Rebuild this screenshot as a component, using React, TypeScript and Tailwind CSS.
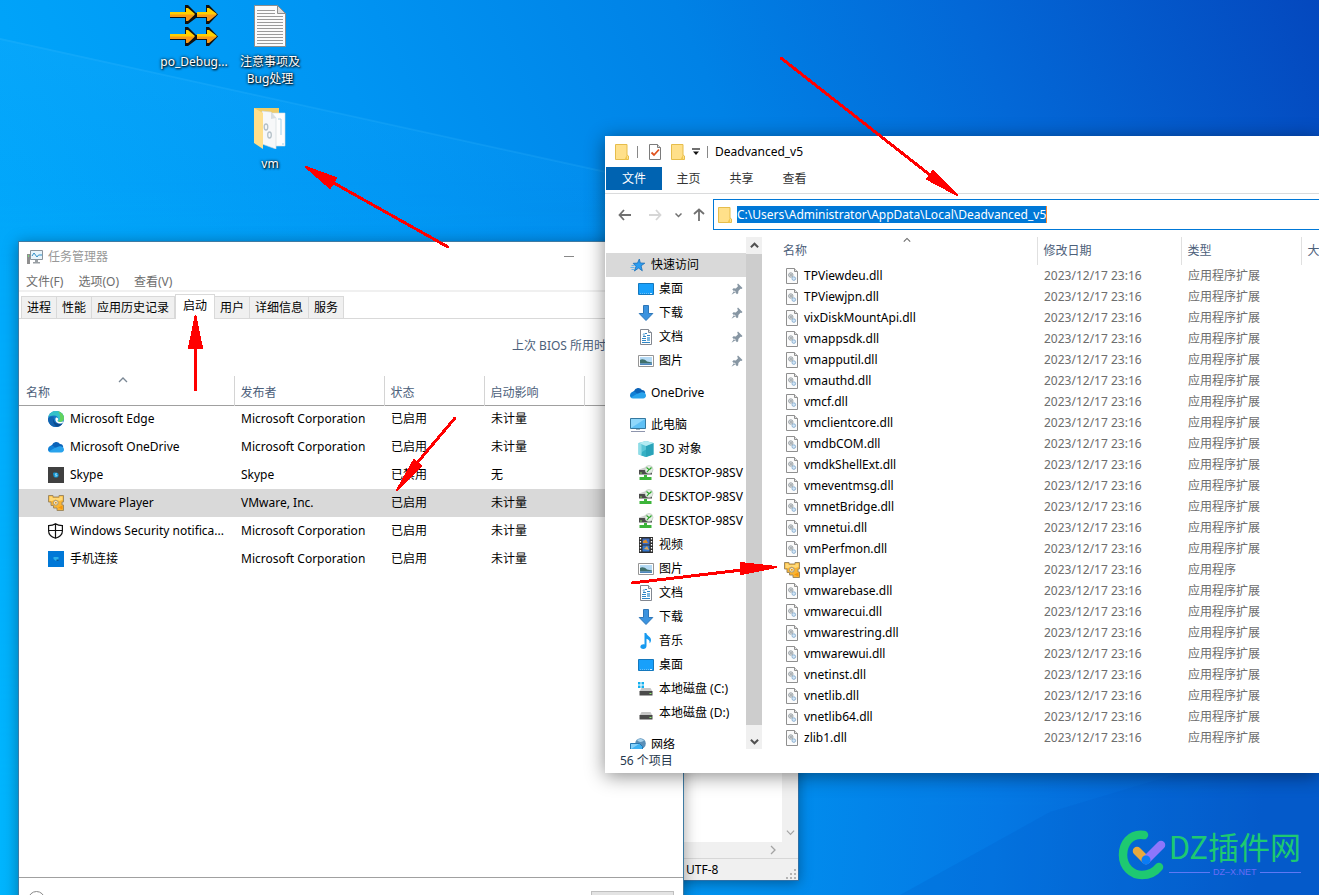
import type { ReactNode } from "react";

type IconProps = { className?: string };

/* ---------- Desktop icons ---------- */

function ArrowPair() {
  return (
    <g>
      <path d="M0 7h15V0h3l8 8h10V0h3l9 9.500L39 19h-3v-6H26l-8 6h-3v-6H0z" fill="#111" />
      <path d="M0 7h16V3h2l7 6-7 6h-2v-3H0zM27 7h10V3h2l8 6-8 6h-2v-3H27z" fill="#ffd000" />
      <path d="M0 9.500h25L18 16h-2v-4H0zM27 9.500h20L39 16h-2v-4H27z" fill="#f79a18" />
    </g>
  );
}

function PoDebugIcon() {
  return (
    <svg viewBox="0 0 48 42" className="h-[42px] w-[48px]" aria-hidden="true">
      <ArrowPair />
      <g transform="translate(0 22)"><ArrowPair /></g>
    </svg>
  );
}

function TextFileIcon() {
  return (
    <svg viewBox="0 0 32 42" className="h-[42px] w-[32px]" aria-hidden="true">
      <path d="M.5.5h23l8 8v33H.5z" fill="#fbfbfb" stroke="#8d8d8d" />
      <path d="M23.500.5v8h8z" fill="#dedede" stroke="#8d8d8d" />
      <path
        d="M3 5.500h18M3 8.500h18M3 11.500h26M3 14.500h26M3 17.500h26M3 20.500h26M3 23.500h26M3 26.500h26M3 29.500h26M3 32.500h26M3 35.500h26M3 38.500h26"
        stroke="#9a9a9a"
      />
    </svg>
  );
}

function OpenFolderIcon() {
  return (
    <svg viewBox="0 0 32 42" className="h-[42px] w-[32px]" aria-hidden="true">
      <path d="M0 1h25v35H9z" fill="#f0cc66" />
      <path d="M17 6h14v33H17z" fill="#fdfdfd" stroke="#d5dde2" strokeWidth=".6" />
      <path d="M8 4l9 1 5 6v31L8 37z" fill="#f7f8f9" stroke="#cfd6da" strokeWidth=".6" />
      <path d="M17 5v7l5-1z" fill="#d8dee2" />
      <ellipse cx="12" cy="20" rx="1.800" ry="3" fill="none" stroke="#b4c0c8" strokeWidth="1.300" />
      <ellipse cx="15.500" cy="28" rx="1.800" ry="3" fill="none" stroke="#b4c0c8" strokeWidth="1.300" />
      <path d="M24 12h3v16M28 37h2" fill="none" stroke="#a4d0e8" />
      <path d="M0 1l9 5v36l-9-6z" fill="#ffdf8c" />
    </svg>
  );
}

/* ---------- Small icons ---------- */

function TaskManagerIcon() {
  return (
    <svg viewBox="0 0 16 16" className="size-4 shrink-0" aria-hidden="true">
      <path d="M0 5h3v10H0z" fill="#8f8f8f" />
      <path d="M1 6h1v2H1z" fill="#7cd67c" />
      <path d="M3.500 1.500h12v9h-12z" fill="#e8f4fb" stroke="#8a949c" />
      <path d="M5 7l2-3 3 4 1.500-2H15" fill="none" stroke="#2f8fc7" />
      <path d="M8 11h3v2h2v1.500H6V13h2z" fill="#9aa0a5" />
    </svg>
  );
}

function EdgeIcon() {
  return (
    <svg viewBox="0 0 16 16" className="size-4 shrink-0" aria-hidden="true">
      <circle cx="8" cy="8" r="8" fill="#1478c8" />
      <path d="M.3 6C1.500 1.800 5 0 8 0c4.500 0 8 3.200 8 7 0 2.500-2 4-4 4-1.500 0-2.500-.6-2.500-1.300 0-.5.700-.8.700-1.900C10.200 6 8.300 4.600 6 4.600 3.500 4.600 1.300 5.500.3 6z" fill="#35c1c9" />
      <path d="M10 .3c3.500.9 6 3.600 6 6.700 0 2.500-2 4-4 4-1 0-1.700-.2-2.100-.6C13 9.500 13 4 10 .3z" fill="#63d35d" />
      <path d="M6 6c-2 2-1.500 7 4 9.700-5 1.500-10-2.500-10-7.700C1.500 5.500 4 5 6 6z" fill="#1263b0" />
      <path d="M6 7c-1 3.500 2 7 8.500 5.500-1 1.700-3 3-5 3.300C5.500 14.500 4 9.500 6 7z" fill="#0c4a8e" />
      <path d="M8 6.500c1.300-.3 2.500.8 2.200 2-.2.700-.7.900-.7 1.300.3 1 2.500 1.700 4.500.9 1-.3 1.500 0 1.200.6-1.500 1.900-5.700 1.700-7.200-.8-.8-1.300-.8-3.200 0-4z" fill="#fff" />
    </svg>
  );
}

function OneDriveIcon() {
  return (
    <svg viewBox="0 0 16 16" className="size-4 shrink-0" aria-hidden="true">
      <path d="M4 6a4.500 4.500 0 018-1c2 0 3 1.300 3.200 3L8 10 2 7.500z" fill="#0b63b8" />
      <path d="M0 10.500C0 8 2 6.500 4.300 6.500L11 11l-9.500 2C.6 12.600 0 11.600 0 10.500z" fill="#1180d6" />
      <path d="M3 13.500c-1 0-1.800-.3-2.300-1l6-3.500 4-1.500C13.500 6.800 16 8 16 10.600c0 1.700-1.200 2.900-2.800 2.900z" fill="#29a3ec" />
    </svg>
  );
}

function SkypeIcon() {
  return (
    <svg viewBox="0 0 16 16" className="size-4 shrink-0" aria-hidden="true">
      <path d="M0 0h16v16H0z" fill="#404040" />
      <circle cx="8" cy="8" r="2.600" fill="#1296d4" />
      <circle cx="6.300" cy="6.800" r="1.300" fill="#1296d4" />
      <path d="M9 7c-.5-.6-2-.4-1.800.4.200.6 1.800.4 1.800 1.200 0 .7-1.600.7-2 0" fill="none" stroke="#fff" strokeWidth=".6" />
    </svg>
  );
}

function VmwareIcon() {
  return (
    <svg viewBox="0 0 16 16" className="size-4 shrink-0" aria-hidden="true">
      <path d="M.5.500h4.500v1.500h6V.500h4.500V7H14v3h1.500v5.500H9V13H5.500v-2.500H3V7H.5z" fill="#f8b434" stroke="#a08a60" />
      <path d="M1.500 1.500h3V3h7V1.500h3V5l-3 1-4-1.500L4 6H1.500z" fill="#ffd978" />
      <path d="M10 12.500l4.500-2v4z" fill="#f6960c" />
      <circle cx="7.800" cy="7.800" r="2.400" fill="#fbe7b4" stroke="#a39a85" />
      <path d="M7 7h1.600v1.600H7z" fill="#e5951c" />
    </svg>
  );
}

function ShieldIcon() {
  return (
    <svg viewBox="0 0 16 16" className="size-4 shrink-0" aria-hidden="true">
      <path d="M7.500.8C9.200 2 11.700 2.700 14.400 2.700V8c0 3.500-3 6-6.900 7.300C3.600 14 .6 11.500.6 8V2.700C3.300 2.700 5.800 2 7.500.8zM7.500 1v14M.6 7.500h13.800" fill="#fff" stroke="#111" strokeWidth="1.200" />
    </svg>
  );
}

function PhoneLinkIcon() {
  return (
    <svg viewBox="0 0 16 16" className="size-4 shrink-0" aria-hidden="true">
      <path d="M0 0h16v16H0z" fill="#0078d7" />
      <path d="M5.500 6h5v2.500L8 10 5.500 8z" fill="#2bb0ea" />
      <path d="M8.500 8.500h2v1.500h-2z" fill="#0a5594" />
    </svg>
  );
}

function FolderIcon() {
  return (
    <svg viewBox="0 0 14 16" className="h-4 w-3.5 shrink-0" aria-hidden="true">
      <path d="M.5.500H12V11l1.500 1v3.500H.5z" fill="#ffe08a" stroke="#e6bd4b" />
      <path d="M12 10.500v5H9.500z" fill="#f2c84f" />
    </svg>
  );
}

function CheckPageIcon() {
  return (
    <svg viewBox="0 0 12 16" className="h-4 w-3 shrink-0" aria-hidden="true">
      <path d="M.5.500h8l3 3v12H.5z" fill="#fff" stroke="#7b7b7b" />
      <path d="M8.500.500v3h3" fill="#ddd" stroke="#7b7b7b" />
      <path d="M2.500 8.500L5 11l5-5.500" fill="none" stroke="#e0521f" strokeWidth="1.800" />
    </svg>
  );
}

function DllIcon() {
  return (
    <svg viewBox="0 0 16 16" className="size-4 shrink-0" aria-hidden="true">
      <path d="M2.500.500h8l3 3v12h-11z" fill="#fbfbfb" stroke="#8f8f8f" />
      <path d="M10.500.500v3h3" fill="#e3e3e3" stroke="#8f8f8f" />
      <circle cx="6.800" cy="7" r="2.200" fill="#eef0f1" stroke="#8f969c" strokeWidth=".9" />
      <circle cx="6.800" cy="7" r=".8" fill="none" stroke="#7d858b" strokeWidth=".7" />
      <circle cx="9.800" cy="10.600" r="1.800" fill="#d3e6f6" stroke="#86acce" strokeWidth=".9" />
    </svg>
  );
}

function StarIcon() {
  return (
    <svg viewBox="0 0 16 16" className="size-4 shrink-0" aria-hidden="true">
      <path d="M9.300 2l1 4 4.500.2-3.700 2.600 1.200 5-3.700-2.700-4.200 2.900 1.600-4.600L3.200 6.300l4.300-.2z" fill="#2b9cf0" stroke="#1b6fb8" strokeWidth=".8" />
      <path d="M1.500 8.500h3M.5 10.500h4M1.500 12.500h2.500" stroke="#5bb2ef" strokeWidth=".9" />
    </svg>
  );
}

function DesktopIcon() {
  return (
    <svg viewBox="0 0 16 16" className="size-4 shrink-0" aria-hidden="true">
      <path d="M.5 2.500h15v11H.5z" fill="#18a0fb" stroke="#1478bd" />
      <path d="M2 12.500h9" stroke="#6fc0f5" strokeDasharray="1 1" />
      <path d="M12 12.500h2" stroke="#d5eeff" />
    </svg>
  );
}

function DownloadIcon() {
  return (
    <svg viewBox="0 0 16 16" className="size-4 shrink-0" aria-hidden="true">
      <path d="M5.500.500h5v8h4.300L8 15.500 1.200 8.500h4.300z" fill="#3b93df" stroke="#2d76b8" />
    </svg>
  );
}

function DocumentIcon() {
  return (
    <svg viewBox="0 0 16 16" className="size-4 shrink-0" aria-hidden="true">
      <path d="M2.500.500h8l3 3v12h-11z" fill="#fff" stroke="#828790" />
      <path d="M10.500.500v3h3" fill="#dde3e8" stroke="#828790" />
      <path d="M7 4.500h2M5 7.500h3M9 6.500h3M4 9.500h4M4 11.500h4M4 13.500h8" stroke="#2f86c5" />
      <path d="M5 5.500l1-1v3" fill="none" stroke="#2f86c5" strokeWidth=".8" />
      <path d="M9 8h3v4H9z" fill="#7fb9e0" />
    </svg>
  );
}

function PictureIcon() {
  return (
    <svg viewBox="0 0 16 16" className="size-4 shrink-0" aria-hidden="true">
      <path d="M.5 2.500h15v11H.5z" fill="#fff" stroke="#959595" />
      <path d="M2 4h12v8H2z" fill="#b5daf5" />
      <path d="M2 7c2-1.500 5-.5 7 1.500l5 1v1H2z" fill="#3f6f6b" />
      <path d="M2 10.500h12V12H2z" fill="#4e86bd" />
    </svg>
  );
}

function ComputerIcon() {
  return (
    <svg viewBox="0 0 16 16" className="size-4 shrink-0" aria-hidden="true">
      <path d="M.5 1.500h15v10H.5z" fill="#5fc0f5" stroke="#35789f" />
      <path d="M1 2h14L1 11z" fill="#8fd7fb" />
      <path d="M6 12h4v1H6z" fill="#9eb3c0" />
      <path d="M1 14.500h14" stroke="#8e95ad" />
    </svg>
  );
}

function CubeIcon() {
  return (
    <svg viewBox="0 0 16 16" className="size-4 shrink-0" aria-hidden="true">
      <path d="M.5 2L8 0l7.500 2v11.500L8 16 .5 13.500z" fill="#5bc6d6" />
      <path d="M8 5l7.500-3v11.500L8 16z" fill="#2aa3b9" />
      <path d="M.5 2L8 0l7.500 2L8 5z" fill="#b4ecf3" />
      <path d="M.5 2L3.500 3.200v11.300l-3-1z" fill="#8edde8" />
      <path d="M4 11l4-2.500v7.500l-4.500-1.500z" fill="#36b0c4" />
    </svg>
  );
}

function NetworkPcIcon() {
  return (
    <svg viewBox="0 0 16 16" className="size-4 shrink-0" aria-hidden="true">
      <path d="M1 4.500L8 2v3H1z" fill="#cfcfcf" />
      <path d="M1 5h13v4.500H1z" fill="#4b4b4b" />
      <path d="M2 8h2" stroke="#7fdd5a" />
      <circle cx="11" cy="4.500" r="4" fill="#e6ede6" stroke="#b7c4b7" strokeWidth=".6" />
      <path d="M8.500 2.500L11 4.500 9 7M13.500 2.500L11.500 4.500" fill="none" stroke="#2da52b" strokeWidth="1.200" />
      <path d="M6 10h3v2h4.500v3h-12v-3H6z" fill="#3db53a" />
    </svg>
  );
}

function VideoIcon() {
  return (
    <svg viewBox="0 0 16 16" className="size-4 shrink-0" aria-hidden="true">
      <path d="M1 0h14v16H1z" fill="#2d2d2d" />
      <path d="M2.500 1v14M13.500 1v14" stroke="#fff" strokeDasharray="1.500 1.500" strokeWidth="1.300" />
      <path d="M4.500 1.500h7v6h-7z" fill="#3f6fc4" />
      <path d="M4.500 8.500h7v6h-7z" fill="#3578ce" />
      <path d="M5 4l3-1.500L10 6H5z" fill="#d98b2b" />
      <path d="M6 12l3-3 2 4z" fill="#d6a55a" />
    </svg>
  );
}

function MusicIcon() {
  return (
    <svg viewBox="0 0 16 16" className="size-4 shrink-0" aria-hidden="true">
      <path d="M6.500 0h1.800c.3 3 4.700 3.500 4.700 7 0 1.500-.6 2.500-1.500 3.300.6-2.300-.6-4-3-4.600V13c0 1.800-1.500 3-3.200 3S2 15 2.400 13.500c.4-1.600 2.300-2.600 4.100-2z" fill="#179af0" />
    </svg>
  );
}

function DiskIcon({ system }: { system?: boolean }) {
  return (
    <svg viewBox="0 0 16 16" className="size-4 shrink-0" aria-hidden="true">
      {system && <path d="M0 1h2.500v2.500H0zM3.500 1H6v2.500H3.500zM0 4.500h2.500V7H0zM3.500 4.500H6V7H3.500z" fill="#12b0ef" />}
      <path d="M3.500 7h9l2 3.500h-13z" fill="#c6c6c6" />
      <path d="M1.500 10h13v4.500h-13z" fill="#4a4a4a" />
      <path d="M11.500 12.500h2" stroke="#8cf06a" />
    </svg>
  );
}

function NetworkIcon() {
  return (
    <svg viewBox="0 0 16 16" className="size-4 shrink-0" aria-hidden="true">
      <circle cx="10.500" cy="6.500" r="5.300" fill="#5a8fb8" />
      <path d="M7 3c2-1.500 5-1.500 7 .5-2 2-5 2-7-.5z" fill="#a9d2ec" />
      <path d="M.5 6.500h9l3 3V14H.5z" fill="#3cb1f3" stroke="#2477b2" />
      <path d="M1 7h8L1 12z" fill="#84d0fa" />
    </svg>
  );
}

function PinIcon() {
  return (
    <svg viewBox="0 0 12 12" className="size-3 shrink-0" aria-hidden="true">
      <path d="M7 .500l4.500 4.500-1 1-1-.2L7.400 8l-.2 2.200L6 11.300 1.300 6.500l1.200-1.200 2.300.1L7 3.300 6.200 1.500zM3.300 7.500L.5 11.700l4.400-2.600z" fill="#8796a3" />
    </svg>
  );
}

function Chevron({ d, className }: { d: string } & IconProps) {
  return (
    <svg viewBox="0 0 10 10" className={className} aria-hidden="true">
      <path d={d} fill="none" stroke="currentColor" strokeWidth="1.300" />
    </svg>
  );
}

const UP = "M1 7l4-4 4 4";
const DOWN = "M1 3l4 4 4-4";
const RIGHT = "M3 1l4 4-4 4";

function ScrollArrow({ d }: { d: string }) {
  return (
    <svg viewBox="0 0 10 10" className="size-[9px]" aria-hidden="true">
      <path d={d} fill="none" stroke="#505050" strokeWidth="2.200" />
    </svg>
  );
}

/* ---------- Desktop ---------- */

function Wallpaper() {
  return (
    <svg viewBox="0 0 1319 895" preserveAspectRatio="none" className="absolute inset-0 size-full" aria-hidden="true">
      <defs>
        <linearGradient id="base" x1="0" y1="0.3" x2="1" y2="0">
          <stop offset="0" stopColor="#00a8fb" />
          <stop offset="0.3" stopColor="#0095f3" />
          <stop offset="0.55" stopColor="#0082e6" />
          <stop offset="0.75" stopColor="#0368d7" />
          <stop offset="1" stopColor="#0448be" />
        </linearGradient>
        <linearGradient id="foot" x1="0" y1="0" x2="1" y2="0.05">
          <stop offset="0" stopColor="#00b8ff" />
          <stop offset="0.6" stopColor="#0092f0" />
          <stop offset="0.8" stopColor="#0478e4" />
          <stop offset="1" stopColor="#055bcb" />
        </linearGradient>
        <linearGradient id="fade" x1="0" y1="0" x2="0" y2="1">
          <stop offset="0.2" stopColor="#000" />
          <stop offset="0.9" stopColor="#fff" />
        </linearGradient>
        <mask id="lower">
          <path d="M0 0h1319v895H0z" fill="url(#fade)" />
        </mask>
        <linearGradient id="beam" x1="0" y1="0" x2="0" y2="1">
          <stop offset="0" stopColor="#20b0ff" stopOpacity="0.220" />
          <stop offset="1" stopColor="#10a8ff" stopOpacity="0.05" />
        </linearGradient>
      </defs>
      <path d="M0 0h1319v895H0z" fill="url(#base)" />
      <path d="M0 0h1319v895H0z" fill="url(#foot)" mask="url(#lower)" />
      <path d="M0 38L606 172v70H0z" fill="url(#beam)" />
      <path d="M0 39L606 172" stroke="#4cc0ff" strokeOpacity="0.15" strokeWidth="2" />
      <path d="M1050 812L1180 773H1319V895H900z" fill="#0058c8" fillOpacity="0.2" />
    </svg>
  );
}

function DesktopItem({ icon, label }: { icon: ReactNode; label: string }) {
  return (
    <button className="flex w-[76px] flex-col items-center gap-[6px] text-center text-xs leading-[17px] text-white [text-shadow:1px_1px_2px_#000,0_0_3px_#000]">
      {icon}
      <span className="whitespace-pre-line">{label}</span>
    </button>
  );
}

/* ---------- Task manager ---------- */

const startupItems = [
  { icon: <EdgeIcon />, name: "Microsoft Edge", publisher: "Microsoft Corporation", status: "已启用", impact: "未计量" },
  { icon: <OneDriveIcon />, name: "Microsoft OneDrive", publisher: "Microsoft Corporation", status: "已启用", impact: "未计量" },
  { icon: <SkypeIcon />, name: "Skype", publisher: "Skype", status: "已禁用", impact: "无" },
  { icon: <VmwareIcon />, name: "VMware Player", publisher: "VMware, Inc.", status: "已启用", impact: "未计量", selected: true },
  { icon: <ShieldIcon />, name: "Windows Security notifica...", publisher: "Microsoft Corporation", status: "已启用", impact: "未计量" },
  { icon: <PhoneLinkIcon />, name: "手机连接", publisher: "Microsoft Corporation", status: "已启用", impact: "未计量" },
];

const taskTabs = ["进程", "性能", "应用历史记录", "启动", "用户", "详细信息", "服务"];

function TaskManager() {
  return (
    <section
      aria-label="任务管理器"
      className="absolute top-[241px] -bottom-7 left-[18px] flex w-[666px] flex-col border border-[#3f7ba3] bg-white shadow-[0_2px_14px_rgba(0,0,0,0.35)]"
    >
      <header className="flex h-[29px] items-center gap-[5px] pl-2 text-[#999]">
        <TaskManagerIcon />
        <h2 className="grow">任务管理器</h2>
        <button aria-label="最小化" className="mr-[109px] h-5 w-[10px]">
          <span className="block h-px bg-[#888]" />
        </button>
      </header>
      <nav className="flex h-[21px] items-center gap-[15px] border-b-2 border-[#f0f0f0] pt-[2px] pl-[7px] text-[#6d6d6d]">
        <button>文件(F)</button>
        <button>选项(O)</button>
        <button>查看(V)</button>
      </nav>
      <div role="tablist" className="flex h-[27px] items-end border-b border-[#d9d9d9] pl-[2px]">
        {taskTabs.map((tab) =>
          tab === "启动" ? (
            <button key={tab} role="tab" aria-selected="true" className="-mb-px h-[25px] border border-b-0 border-[#d9d9d9] bg-white px-[7px] pb-[3px]">
              {tab}
            </button>
          ) : (
            <button key={tab} role="tab" aria-selected="false" className="h-[22px] border-t border-r border-[#d9d9d9] bg-[#f0f0f0] px-[5px] first:border-l">
              {tab}
            </button>
          ),
        )}
      </div>
      <p className="h-[57px] pt-[19px] pl-[493px] whitespace-nowrap text-[#4c607a]">上次 BIOS 所用时间:</p>
      <div className="grow">
        <table className="w-full table-fixed border-collapse text-left">
          <colgroup>
            <col className="w-[215px]" />
            <col className="w-[150px]" />
            <col className="w-[100px]" />
            <col className="w-[100px]" />
            <col />
          </colgroup>
          <thead>
            <tr className="h-[29px] border-b border-[#a0a0a0] text-[#4c607a]">
              <th className="border-r border-[#d4d4d4] p-0 align-top font-normal">
                <div className="pr-[6px]">
                  <Chevron d={UP} className="mx-auto -mt-px size-[10px] text-[#7a8794]" />
                </div>
                <span className="block pl-[7px]">名称</span>
              </th>
              <th className="border-r border-[#d4d4d4] p-0 pt-[6px] pl-[6px] font-normal">发布者</th>
              <th className="border-r border-[#d4d4d4] p-0 pt-[6px] pl-[6px] font-normal">状态</th>
              <th className="border-r border-[#d4d4d4] p-0 pt-[6px] pl-[6px] font-normal">启动影响</th>
              <th className="p-0" aria-label="空列" />
            </tr>
          </thead>
          <tbody>
            {startupItems.map((item) => (
              <tr key={item.name} className={item.selected ? "h-7 bg-[#d9d9d9]" : "h-7"}>
                <td className="p-0 pl-[29px]">
                  <div className="flex items-center gap-[6px] whitespace-nowrap">
                    {item.icon}
                    {item.name}
                  </div>
                </td>
                <td className="p-0 pl-[7px] whitespace-nowrap">{item.publisher}</td>
                <td className="p-0 pl-[7px]">{item.status}</td>
                <td className="p-0 pl-[7px]">{item.impact}</td>
                <td />
              </tr>
            ))}
          </tbody>
        </table>
      </div>
      <footer className="flex h-[45px] items-start justify-between border-t border-[#a0a0a0] pt-[13px] pr-[9px] pl-[9px]">
        <button aria-label="简略信息" className="size-[17px] rounded-full border border-[#888]" />
        <button disabled className="h-6 w-[83px] border border-[#bfbfbf] bg-[#e3e3e3] text-[#a0a0a0]">
          禁用(A)
        </button>
      </footer>
    </section>
  );
}

/* ---------- Notepad ---------- */

function Notepad() {
  return (
    <section aria-label="记事本" className="absolute top-[600px] left-[540px] flex h-[281px] w-[259px] flex-col border border-[#2f6fa5] bg-white shadow-[0_2px_12px_rgba(0,0,0,0.35)]">
      <div className="flex grow">
        <div className="grow bg-white" />
        <div className="flex w-4 flex-col items-center justify-end bg-[#f0f0f0] pb-[5px] text-[#a3a3a3]">
          <Chevron d={DOWN} className="size-[9px]" />
        </div>
      </div>
      <div className="flex h-4 items-center justify-end bg-[#f0f0f0] pr-5 text-[#a3a3a3]">
        <Chevron d={RIGHT} className="size-[10px]" />
      </div>
      <footer className="flex h-[22px] items-center justify-between border-t border-[#d7d7d7] bg-[#f0f0f0] pl-[145px]">
        UTF-8
        <svg viewBox="0 0 11 11" className="mr-px size-[11px] self-end" aria-hidden="true">
          <path d="M8 0h2v2H8zM4 4h2v2H4zM8 4h2v2H8zM0 8h2v2H0zM4 8h2v2H4zM8 8h2v2H8z" fill="#b4b4b4" />
        </svg>
      </footer>
    </section>
  );
}

/* ---------- Explorer ---------- */

type NavItem = { icon: ReactNode; label: string; pinned?: boolean };
type NavGroup = { icon: ReactNode; label: string; active?: boolean; items: NavItem[] };

const navGroups: NavGroup[] = [
  {
    icon: <StarIcon />,
    label: "快速访问",
    active: true,
    items: [
      { icon: <DesktopIcon />, label: "桌面", pinned: true },
      { icon: <DownloadIcon />, label: "下载", pinned: true },
      { icon: <DocumentIcon />, label: "文档", pinned: true },
      { icon: <PictureIcon />, label: "图片", pinned: true },
    ],
  },
  { icon: <OneDriveIcon />, label: "OneDrive", items: [] },
  {
    icon: <ComputerIcon />,
    label: "此电脑",
    items: [
      { icon: <CubeIcon />, label: "3D 对象" },
      { icon: <NetworkPcIcon />, label: "DESKTOP-98SV" },
      { icon: <NetworkPcIcon />, label: "DESKTOP-98SV" },
      { icon: <NetworkPcIcon />, label: "DESKTOP-98SV" },
      { icon: <VideoIcon />, label: "视频" },
      { icon: <PictureIcon />, label: "图片" },
      { icon: <DocumentIcon />, label: "文档" },
      { icon: <DownloadIcon />, label: "下载" },
      { icon: <MusicIcon />, label: "音乐" },
      { icon: <DesktopIcon />, label: "桌面" },
      { icon: <DiskIcon system />, label: "本地磁盘 (C:)" },
      { icon: <DiskIcon />, label: "本地磁盘 (D:)" },
    ],
  },
  { icon: <NetworkIcon />, label: "网络", items: [] },
];

const fileNames = [
  "TPViewdeu.dll", "TPViewjpn.dll", "vixDiskMountApi.dll", "vmappsdk.dll", "vmapputil.dll", "vmauthd.dll",
  "vmcf.dll", "vmclientcore.dll", "vmdbCOM.dll", "vmdkShellExt.dll", "vmeventmsg.dll", "vmnetBridge.dll",
  "vmnetui.dll", "vmPerfmon.dll", "vmplayer", "vmwarebase.dll", "vmwarecui.dll", "vmwarestring.dll",
  "vmwarewui.dll", "vnetinst.dll", "vnetlib.dll", "vnetlib64.dll", "zlib1.dll",
];

function NavPane() {
  return (
    <div className="flex w-[157px] shrink-0 pl-px">
      <nav aria-label="导航窗格" className="flex w-[140px] flex-col gap-2 overflow-hidden pt-4">
        {navGroups.map((group) => (
          <ul key={group.label} className="shrink-0">
            <li>
              <a
                href={`#${group.label}`}
                className={
                  group.active
                    ? "flex h-6 items-center gap-[5px] bg-[#d9d9d9] pl-6 whitespace-nowrap"
                    : "flex h-6 items-center gap-[5px] pl-6 whitespace-nowrap"
                }
              >
                {group.icon}
                {group.label}
              </a>
            </li>
            {group.items.map((item, i) => (
              <li key={i}>
                <a href={`#${item.label}`} className="flex h-6 items-center gap-[5px] pr-[3px] pl-8 whitespace-nowrap">
                  {item.icon}
                  <span className="grow">{item.label}</span>
                  {item.pinned && <PinIcon />}
                </a>
              </li>
            ))}
          </ul>
        ))}
      </nav>
      <div className="flex grow flex-col items-center bg-[#f0f0f0]">
        <div className="flex h-[17px] items-center">
          <ScrollArrow d={UP} />
        </div>
        <div className="w-full grow bg-[#cdcdcd]" />
        <div className="flex h-6 items-center pt-2">
          <ScrollArrow d={DOWN} />
        </div>
      </div>
    </div>
  );
}

function FileList() {
  return (
    <div className="ml-[15px] min-w-0 grow overflow-hidden">
      <table className="w-full table-fixed border-collapse text-left">
        <colgroup>
          <col className="w-[260px]" />
          <col className="w-[144px]" />
          <col className="w-[120px]" />
          <col />
        </colgroup>
        <thead>
          <tr className="h-[28px] text-[#4c607a]">
            <th className="border-r border-[#e0e0e0] p-0 align-top font-normal">
              <Chevron d={UP} className="mx-auto -mt-px h-[8px] w-[10px] text-[#666]" />
              <span className="-mt-px block pl-[6px] leading-4">名称</span>
            </th>
            <th className="border-r border-[#e0e0e0] p-0 pl-[6px] font-normal">修改日期</th>
            <th className="border-r border-[#e0e0e0] p-0 pl-[6px] font-normal">类型</th>
            <th className="overflow-hidden p-0 pl-[6px] font-normal whitespace-nowrap">大小</th>
          </tr>
        </thead>
        <tbody>
          {fileNames.map((name) => (
            <tr key={name} className="h-[21px] text-[#6d6d6d]">
              <td className="p-0 pl-[7px]">
                <div className="flex items-center gap-1 text-black">
                  {name === "vmplayer" ? <VmwareIcon /> : <DllIcon />}
                  {name}
                </div>
              </td>
              <td className="p-0 pl-[7px]">2023/12/17 23:16</td>
              <td className="p-0 pl-[7px]">{name === "vmplayer" ? "应用程序" : "应用程序扩展"}</td>
              <td />
            </tr>
          ))}
        </tbody>
      </table>
    </div>
  );
}

function Explorer() {
  return (
    <section
      aria-label="Deadvanced_v5"
      className="absolute top-[136px] right-0 left-[605px] flex flex-col bg-white shadow-[0_3px_18px_rgba(0,0,0,0.45)]"
    >
      <header className="flex h-[31px] items-center pl-[10px]">
        <FolderIcon />
        <span className="mr-[11px] ml-2 h-3 w-px bg-[#888]" />
        <CheckPageIcon />
        <span className="ml-[10px] flex">
          <FolderIcon />
        </span>
        <button aria-label="自定义快速访问工具栏" className="ml-[7px]">
          <svg viewBox="0 0 8 8" className="size-2" aria-hidden="true">
            <path d="M0 1h8" stroke="#111" strokeWidth="1.200" />
            <path d="M1 3.500h6L4 7z" fill="#111" />
          </svg>
        </button>
        <span className="mr-[7px] ml-[7px] h-3 w-px bg-[#888]" />
        <h2>Deadvanced_v5</h2>
      </header>
      <nav className="flex h-[27px] items-start border-b border-[#dadbdc] pl-px text-[#333]">
        <button className="h-[23px] w-14 bg-[#0063b1] text-white">文件</button>
        <button className="h-[24px] w-[53px]">主页</button>
        <button className="h-[24px] w-[53px]">共享</button>
        <button className="h-[24px] w-[53px]">查看</button>
      </nav>
      <div className="flex h-[43px] items-center pb-[2px]">
        <button aria-label="后退" className="ml-[13px]">
          <svg viewBox="0 0 13 12" className="h-3 w-[13px]" aria-hidden="true">
            <path d="M6 1L1.500 6 6 11M1.500 6H13" fill="none" stroke="#707070" strokeWidth="1.800" />
          </svg>
        </button>
        <button aria-label="前进" disabled className="ml-[18px]">
          <svg viewBox="0 0 13 12" className="h-3 w-[13px]" aria-hidden="true">
            <path d="M7 1l4.500 5L7 11M11.500 6H0" fill="none" stroke="#d6d6d6" strokeWidth="1.800" />
          </svg>
        </button>
        <button aria-label="最近浏览的位置" className="ml-[13px]">
          <svg viewBox="0 0 7 6" className="h-[6px] w-[7px]" aria-hidden="true">
            <path d="M.5 1.500l3 3 3-3" fill="none" stroke="#707070" strokeWidth="1.500" />
          </svg>
        </button>
        <button aria-label="上移" className="ml-[11px]">
          <svg viewBox="0 0 12 13" className="h-[13px] w-3" aria-hidden="true">
            <path d="M1 6l5-4.500L11 6M6 1.500V13" fill="none" stroke="#707070" strokeWidth="1.800" />
          </svg>
        </button>
        <div className="ml-2 flex h-[31px] min-w-0 grow items-center gap-[5px] border border-r-0 border-[#0078d7] bg-white pl-1">
          <FolderIcon />
          <input
            type="text"
            aria-label="地址"
            defaultValue="C:\Users\Administrator\AppData\Local\Deadvanced_v5"
            className="h-[17px] [field-sizing:content] border-r border-[#ff8728] bg-[#0078d7] text-white outline-none"
          />
        </div>
      </div>
      <div className="flex h-[512px]">
        <NavPane />
        <FileList />
      </div>
      <footer className="flex h-6 items-center pl-[15px] text-[#26384d]">56 个项目</footer>
    </section>
  );
}

/* ---------- Overlays ---------- */

function Watermark() {
  return (
    <div className="absolute right-[18px] bottom-[14px] flex gap-[2px]">
      <svg viewBox="0 0 49 52" className="h-[52px] w-[49px]" aria-hidden="true">
        <path d="M26 6C12 4 5 15 5 26c0 12 9 20 19 20 8 0 13-3 17-8" fill="none" stroke="#1ec971" strokeWidth="8.500" strokeLinecap="round" />
        <path d="M19 22l9 9" stroke="#e6a93c" strokeWidth="8.500" strokeLinecap="round" />
        <path d="M28 31l15-15" stroke="#8d76fb" strokeWidth="8.500" strokeLinecap="round" />
        <circle cx="28" cy="31" r="4.500" fill="#0a7cf5" />
      </svg>
      <div className="flex flex-col gap-[3px]">
        <span className="text-[31px] leading-[34px] font-normal text-[#1ec971] [font-family:'Noto_Sans_CJK_SC',sans-serif]">DZ插件网</span>
        <span className="flex items-center gap-[3px] text-[9px] leading-[12px] text-[#6a6cf6] [font-family:'Liberation_Sans',sans-serif]">
          <span className="h-px grow bg-[#5f78f4]" />
          DZ–X.NET
          <span className="h-px grow bg-[#5f78f4]" />
        </span>
      </div>
    </div>
  );
}

function Annotations() {
  return (
    <svg width="1319" height="895" className="pointer-events-none absolute top-0 left-0" aria-hidden="true" shapeRendering="crispEdges">
      <g fill="#f00" stroke="#f00" strokeLinecap="round" strokeLinejoin="round">
        <path d="M448 247L332 182M195.500 390v-42M455 418l-38 45M781 58l149 117M632 583l110-13" strokeWidth="3" />
        <path d="M306 167l30 11-6 10zM195.500 316l-6.500 32h13zM397 490l17-30 7 6zM957 195l-24-24-6 8zM776 567l-35-4v11z" strokeWidth="2" />
      </g>
    </svg>
  );
}

export default function App() {
  return (
    <main className="relative h-screen w-full overflow-hidden text-xs leading-4 text-black [font-family:'Noto_Sans','Noto_Sans_CJK_SC',sans-serif]">
      <Wallpaper />
      <div className="absolute top-[5px] left-[156px] grid grid-cols-[76px_76px] gap-y-5">
        <DesktopItem icon={<PoDebugIcon />} label="po_Debug..." />
        <DesktopItem icon={<TextFileIcon />} label={"注意事项及\nBug处理"} />
        <span />
        <DesktopItem icon={<OpenFolderIcon />} label="vm" />
      </div>
      <Notepad />
      <TaskManager />
      <Explorer />
      <Watermark />
      <Annotations />
    </main>
  );
}
